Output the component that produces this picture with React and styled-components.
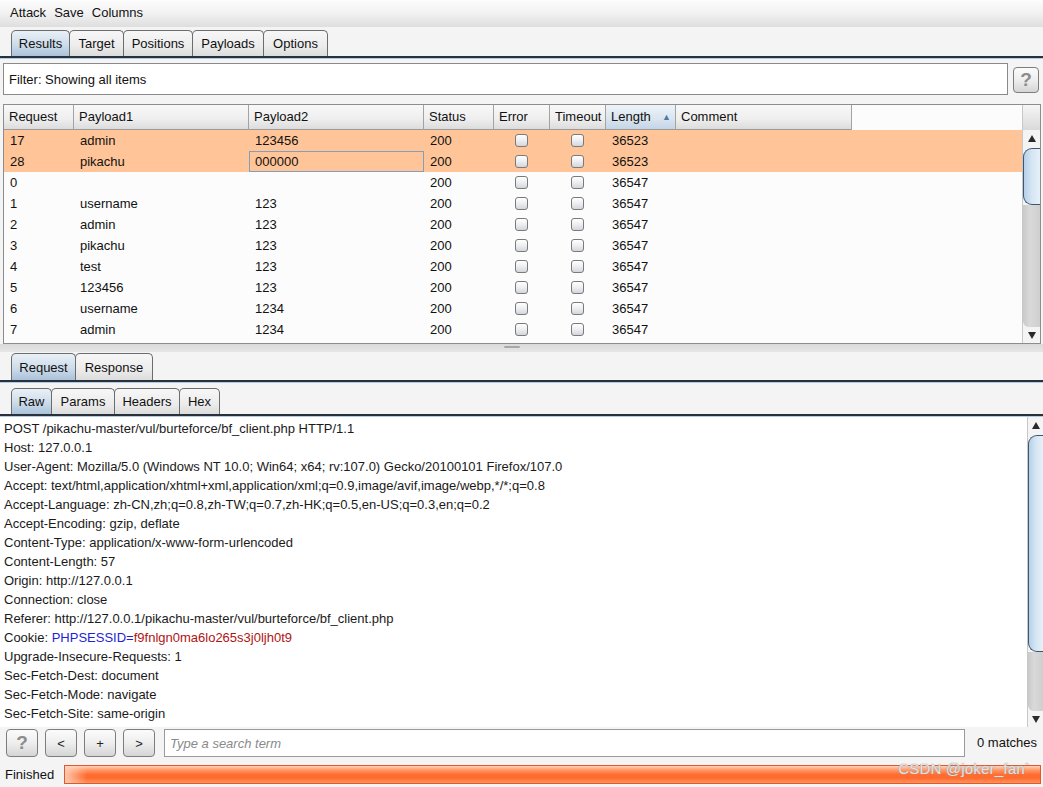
import styled, { createGlobalStyle } from "styled-components"

const GlobalStyle = createGlobalStyle`
  html, body {
    margin: 0;
    padding: 0;
    background: #f4f4f4;
  }
  body {
    font-family: "Liberation Sans", Arial, sans-serif;
    font-size: 13px;
    color: #111;
  }
`

const Page = styled.div`
  width: 1043px;
  height: 787px;
  display: flex;
  flex-direction: column;
  overflow: hidden;
  background: #f4f4f4;
`

const MenuBar = styled.div`
  height: 27px;
  flex: none;
  display: flex;
  align-items: center;
  gap: 8px;
  padding: 0 0 3px 10px;
  box-sizing: border-box;
  background: linear-gradient(to bottom, #fdfdfd 0%, #f1f1f1 50%, #dedede 100%);
`

const MenuItem = styled.span`
  color: #111;
`

const TabStrip = styled.div`
  flex: none;
  display: flex;
  flex-direction: column;
  padding-top: ${p => p.$top}px;
`

const TabRow = styled.div`
  display: flex;
  padding-left: 11px;
`

const Tab = styled.div`
  height: ${p => p.$h || 26}px;
  width: ${p => p.$w}px;
  box-sizing: border-box;
  display: flex;
  align-items: center;
  justify-content: center;
  border: 1px solid #6c6c6c;
  border-bottom: none;
  border-radius: 5px 5px 0 0;
  margin-right: -1px;
  color: #111;
  background: ${p => p.$active
    ? "linear-gradient(to bottom, #e9f0f7 0%, #cddcea 55%, #aac2da 100%)"
    : "linear-gradient(to bottom, #f7f7f7 0%, #ececec 60%, #dcdcdc 100%)"};
`

const TabLine = styled.div`
  height: 3px;
  box-sizing: border-box;
  border-top: 2px solid #27323d;
  background: #b3cae2;
`

const FilterRow = styled.div`
  height: 45px;
  flex: none;
  display: flex;
  align-items: flex-start;
  gap: 5px;
  padding: 4px 4px 0 3px;
  box-sizing: border-box;
`

const FilterBox = styled.div`
  flex: 1;
  height: 32px;
  box-sizing: border-box;
  border: 1px solid #8a8a8a;
  background: #fff;
  display: flex;
  align-items: center;
  padding-left: 5px;
`

const Btn = styled.div`
  width: ${p => p.$w || 32}px;
  height: ${p => p.$h || 28}px;
  flex: none;
  box-sizing: border-box;
  border: 1px solid #7d7d7d;
  border-radius: 4px;
  background: linear-gradient(to bottom, #fbfbfb 0%, #eeeeee 50%, #d5d5d5 100%);
  display: flex;
  align-items: center;
  justify-content: center;
  color: #222;
  font-size: 13px;
  margin-top: ${p => p.$mt || 0}px;
`

const HelpMark = styled.span`
  font-weight: bold;
  font-size: 19px;
  color: #8c8c8c;
`

const TableFrame = styled.div`
  height: 240px;
  flex: none;
  margin: 0 2px 0 3px;
  box-sizing: border-box;
  border: 1px solid #8d8d8d;
  display: flex;
  background: #fcfcfc;
`

const TableMain = styled.div`
  flex: 1;
  display: flex;
  flex-direction: column;
  overflow: hidden;
`

const cols = "70px 175px 175px 70px 56px 56px 70px 176px"

const HeaderRow = styled.div`
  display: grid;
  grid-template-columns: ${cols};
  height: 25px;
  flex: none;
`

const HeadCell = styled.div`
  box-sizing: border-box;
  border-right: 1px solid #a3a3a3;
  border-bottom: 1px solid #9a9a9a;
  padding-left: 5px;
  padding-bottom: 1px;
  display: flex;
  align-items: center;
  justify-content: space-between;
  padding-right: ${p => p.$sorted ? 4 : 0}px;
  background: ${p => p.$sorted
    ? "linear-gradient(to bottom, #eef3f8 0%, #d8e4ef 60%, #c4d5e6 100%)"
    : "linear-gradient(to bottom, #f8f8f8 0%, #eeeeee 60%, #dcdcdc 100%)"};
`

const SortArrow = styled.span`
  color: #4e79a4;
  font-size: 9px;
`

const Row = styled.div`
  display: grid;
  grid-template-columns: ${cols};
  height: 21px;
  flex: none;
  background: ${p => p.$hit ? "#ffc497" : "transparent"};
`

const Cell = styled.div`
  box-sizing: border-box;
  padding-left: 5px;
  display: flex;
  align-items: center;
  justify-content: ${p => p.$center ? "center" : "flex-start"};
  border: 1px solid ${p => p.$focus ? "#7f9fbf" : "transparent"};
  white-space: nowrap;
`

const Check = styled.span`
  width: 13px;
  height: 13px;
  box-sizing: border-box;
  border: 1px solid #7a7a7a;
  border-radius: 3px;
  margin-left: -6px;
  background: linear-gradient(to bottom, #ffffff 0%, #eceef1 50%, #d3d6db 100%);
`

const ScrollCol = styled.div`
  width: ${p => p.$w}px;
  flex: none;
  display: flex;
  flex-direction: column;
  border-left: 1px solid #c8c8c8;
  background: #f4f4f4;
`

const Corner = styled.div`
  height: 25px;
  flex: none;
  background: linear-gradient(to bottom, #f6f6f6, #d9d9d9);
`

const Arrow = styled.div`
  height: 16px;
  flex: none;
  display: flex;
  align-items: center;
  justify-content: center;
  background: #f4f4f4;
`

const Thumb = styled.div`
  height: ${p => p.$h}px;
  flex: none;
  margin-top: 2px;
  box-sizing: border-box;
  border: 1px solid #3c5670;
  border-right: none;
  border-radius: 9px 0 0 9px;
  background: linear-gradient(to right, #b6d0e8 0%, #d6e6f4 50%, #e6f0f9 100%);
`

const Track = styled.div`
  flex: 1;
  background: linear-gradient(to right, #c9c9c9 0%, #d9d9d9 40%, #cfcfcf 100%);
  border-radius: 0 0 0 6px;
`

const Splitter = styled.div`
  height: 8px;
  flex: none;
  display: flex;
  justify-content: center;
  background: linear-gradient(to bottom, #dadada 0%, #e6e6e6 100%);
`

const Grip = styled.div`
  width: 16px;
  height: 2px;
  margin-top: 2px;
  margin-left: -20px;
  border-radius: 1px;
  background: #a8a8a8;
`

const EditorFrame = styled.div`
  flex: 1;
  display: flex;
  background: #fff;
  min-height: 0;
`

const Editor = styled.div`
  flex: 1;
  padding: 2px 0 0 4px;
  line-height: 19px;
  color: #1a1a1a;
  white-space: pre;
  overflow: hidden;
`

const Line = styled.div`
  height: 19px;
`

const Key = styled.span`
  color: #1f1fd6;
`

const Val = styled.span`
  color: #b01414;
`

const SearchRow = styled.div`
  height: 33px;
  flex: none;
  display: flex;
  align-items: flex-start;
  gap: 7px;
  padding: 2px 6px 0 6px;
  box-sizing: border-box;
`

const SearchInput = styled.div`
  flex: 1;
  height: 28px;
  margin-left: 2px;
  box-sizing: border-box;
  border: 1px solid #9a9a9a;
  background: #fff;
  display: flex;
  align-items: center;
  padding-left: 5px;
  font-style: italic;
  color: #8a8a8a;
`

const Matches = styled.span`
  margin-left: 5px;
  line-height: 28px;
  color: #111;
`

const StatusRow = styled.div`
  height: 27px;
  flex: none;
  display: flex;
  align-items: center;
  gap: 10px;
  padding: 2px 2px 0 5px;
  box-sizing: border-box;
`

const Progress = styled.div`
  position: relative;
  flex: 1;
  height: 19px;
  box-sizing: border-box;
  border: 1px solid #e3582b;
  background:
    linear-gradient(to right, rgba(255, 215, 195, 0.85) 0px, rgba(255, 215, 195, 0) 22px),
    linear-gradient(to bottom, #ffd2bd 0%, #ff9c6c 22%, #ff6d31 50%, #ff6a2d 70%, #ff9460 100%);
`

const Watermark = styled.span`
  position: absolute;
  right: 10px;
  top: -6px;
  font-size: 15px;
  color: rgba(235, 235, 235, 0.92);
  text-shadow: 0 0 1px #999, 0 0 1px #aaa;
  letter-spacing: 0.2px;
`

const UpIcon = () => (
  <svg width="8" height="7" viewBox="0 0 8 7"><polygon points="4,0 8,7 0,7" fill="#2a2a2a" /></svg>
)

const DownIcon = () => (
  <svg width="8" height="7" viewBox="0 0 8 7"><polygon points="0,0 8,0 4,7" fill="#2a2a2a" /></svg>
)

const Scrollbar = ({ width, thumb, corner }) => (
  <ScrollCol $w={width}>
    {corner && <Corner />}
    <Arrow><UpIcon /></Arrow>
    <Thumb $h={thumb} />
    <Track />
    <Arrow><DownIcon /></Arrow>
  </ScrollCol>
)

const rows = [
  ["17", "admin", "123456", "36523", true],
  ["28", "pikachu", "000000", "36523", true],
  ["0", "", "", "36547"],
  ["1", "username", "123", "36547"],
  ["2", "admin", "123", "36547"],
  ["3", "pikachu", "123", "36547"],
  ["4", "test", "123", "36547"],
  ["5", "123456", "123", "36547"],
  ["6", "username", "1234", "36547"],
  ["7", "admin", "1234", "36547"],
]

const requestLines = [
  "POST /pikachu-master/vul/burteforce/bf_client.php HTTP/1.1",
  "Host: 127.0.0.1",
  "User-Agent: Mozilla/5.0 (Windows NT 10.0; Win64; x64; rv:107.0) Gecko/20100101 Firefox/107.0",
  "Accept: text/html,application/xhtml+xml,application/xml;q=0.9,image/avif,image/webp,*/*;q=0.8",
  "Accept-Language: zh-CN,zh;q=0.8,zh-TW;q=0.7,zh-HK;q=0.5,en-US;q=0.3,en;q=0.2",
  "Accept-Encoding: gzip, deflate",
  "Content-Type: application/x-www-form-urlencoded",
  "Content-Length: 57",
  "Origin: http://127.0.0.1",
  "Connection: close",
  "Referer: http://127.0.0.1/pikachu-master/vul/burteforce/bf_client.php",
  "COOKIE",
  "Upgrade-Insecure-Requests: 1",
  "Sec-Fetch-Dest: document",
  "Sec-Fetch-Mode: navigate",
  "Sec-Fetch-Site: same-origin",
]

const App = () => {
  return (
    <Page>
      <GlobalStyle />

      <MenuBar>
        <MenuItem>Attack</MenuItem>
        <MenuItem>Save</MenuItem>
        <MenuItem>Columns</MenuItem>
      </MenuBar>

      <TabStrip $top={3}>
        <TabRow>
          <Tab $w={59} $active>Results</Tab>
          <Tab $w={55}>Target</Tab>
          <Tab $w={70}>Positions</Tab>
          <Tab $w={72}>Payloads</Tab>
          <Tab $w={65}>Options</Tab>
        </TabRow>
        <TabLine />
      </TabStrip>

      <FilterRow>
        <FilterBox>Filter: Showing all items</FilterBox>
        <Btn $w={26} $h={26} $mt={4}><HelpMark>?</HelpMark></Btn>
      </FilterRow>

      <TableFrame>
        <TableMain>
          <HeaderRow>
            <HeadCell>Request</HeadCell>
            <HeadCell>Payload1</HeadCell>
            <HeadCell>Payload2</HeadCell>
            <HeadCell>Status</HeadCell>
            <HeadCell>Error</HeadCell>
            <HeadCell>Timeout</HeadCell>
            <HeadCell $sorted>Length <SortArrow>▲</SortArrow></HeadCell>
            <HeadCell>Comment</HeadCell>
          </HeaderRow>
          {rows.map(([req, p1, p2, len, hit]) => (
            <Row key={req} $hit={hit}>
              <Cell>{req}</Cell>
              <Cell>{p1}</Cell>
              <Cell $focus={req === "28"}>{p2}</Cell>
              <Cell>200</Cell>
              <Cell $center><Check /></Cell>
              <Cell $center><Check /></Cell>
              <Cell>{len}</Cell>
              <Cell />
            </Row>
          ))}
        </TableMain>
        <Scrollbar width={17} thumb={57} corner />
      </TableFrame>

      <Splitter><Grip /></Splitter>

      <TabStrip $top={1}>
        <TabRow>
          <Tab $w={65} $h={27} $active>Request</Tab>
          <Tab $w={78} $h={27}>Response</Tab>
        </TabRow>
        <TabLine />
      </TabStrip>

      <TabStrip $top={5}>
        <TabRow>
          <Tab $w={41} $active>Raw</Tab>
          <Tab $w={64}>Params</Tab>
          <Tab $w={66}>Headers</Tab>
          <Tab $w={41}>Hex</Tab>
        </TabRow>
        <TabLine />
      </TabStrip>

      <EditorFrame>
        <Editor>
          {requestLines.map((line, i) => (
            <Line key={i}>
              {line === "COOKIE"
                ? <>Cookie: <Key>PHPSESSID=</Key><Val>f9fnlgn0ma6lo265s3j0ljh0t9</Val></>
                : line}
            </Line>
          ))}
        </Editor>
        <Scrollbar width={15} thumb={217} />
      </EditorFrame>

      <SearchRow>
        <Btn><HelpMark>?</HelpMark></Btn>
        <Btn>&lt;</Btn>
        <Btn>+</Btn>
        <Btn>&gt;</Btn>
        <SearchInput>Type a search term</SearchInput>
        <Matches>0 matches</Matches>
      </SearchRow>

      <StatusRow>
        <span>Finished</span>
        <Progress>
          <Watermark>CSDN @joker_fan`</Watermark>
        </Progress>
      </StatusRow>
    </Page>
  )
}

export default App
